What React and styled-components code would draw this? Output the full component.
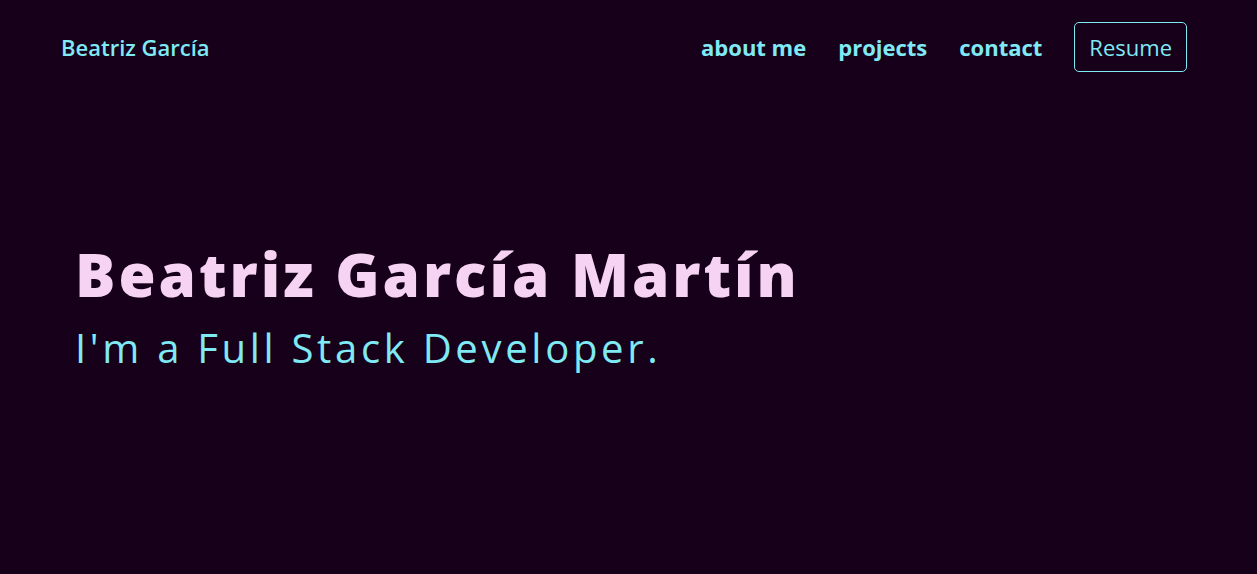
import styled, { createGlobalStyle } from 'styled-components'

const GlobalStyle = createGlobalStyle`
  html, body {
    margin: 0;
    padding: 0;
    background-color: #170019;
  }
  body {
    font-family: "Open Sans", Lato, sans-serif;
  }
`

const Page = styled.div`
  min-height: 574px;
  background-color: #170019;
  display: flex;
  flex-direction: column;
`

const NavBar = styled.nav`
  display: flex;
  justify-content: space-between;
  align-items: center;
  padding: 22px 70px 0 61px;
  height: 50px;
`

const Brand = styled.a`
  color: #7fe9f4;
  font-size: 22px;
  font-weight: 600;
  text-decoration: none;
`

const Links = styled.ul`
  display: flex;
  align-items: center;
  gap: 32px;
  list-style: none;
  margin: 0;
  padding: 0;
`

const NavLink = styled.a`
  color: #7fe9f4;
  font-size: 22px;
  font-weight: 700;
  text-decoration: none;
`

const ResumeButton = styled.a`
  display: flex;
  align-items: center;
  height: 48px;
  padding: 0 14px;
  border: 1px solid #7fe9f4;
  border-radius: 5px;
  color: #7fe9f4;
  font-size: 22px;
  font-weight: 400;
  text-decoration: none;
`

const Hero = styled.section`
  padding: 166px 0 0 75px;
`

const Title = styled.h1`
  margin: 0;
  color: #f6d3f3;
  font-size: 60px;
  font-weight: 800;
  letter-spacing: 3px;
  line-height: 1.2;
`

const Subtitle = styled.h2`
  margin: 14px 0 0;
  color: #7fe9f4;
  font-size: 40px;
  font-weight: 400;
  letter-spacing: 3.7px;
  line-height: 1.2;
`

export default function App() {
  return (
    <Page>
      <GlobalStyle />
      <NavBar>
        <Brand href="#">Beatriz García</Brand>
        <Links>
          <li><NavLink href="#about">about me</NavLink></li>
          <li><NavLink href="#projects">projects</NavLink></li>
          <li><NavLink href="#contact">contact</NavLink></li>
          <li><ResumeButton href="#">Resume</ResumeButton></li>
        </Links>
      </NavBar>
      <Hero>
        <Title>Beatriz García Martín</Title>
        <Subtitle>I'm a Full Stack Developer.</Subtitle>
      </Hero>
    </Page>
  )
}
